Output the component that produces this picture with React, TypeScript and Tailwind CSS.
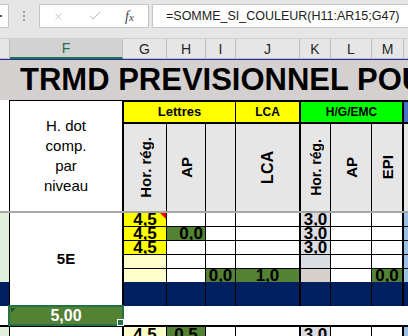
import React from 'react'
import { X, Check } from 'lucide-react'

type Cell = { bg: string; t?: string; right?: boolean; tri?: boolean }

const W = 'bg-white'
const Y = 'bg-[#ffff00]'
const LY = 'bg-[#ffffcc]'
const GR = 'bg-[#548235]'
const KG = 'bg-[#dcdce3]'
const KW = 'bg-[#d6d0cc]'
const NB = 'bg-[#9bc2e6]'
const NAVY = 'bg-[#002060]'

// column boxes G..N (content + right border)
const cols = [
  'w-[43px] border-r border-black',
  'w-[39px] border-r border-black',
  'w-[30px] border-r border-black',
  'w-[65px] border-r-2 border-black',
  'w-[30px] border-r border-black',
  'w-[41px] border-r border-black',
  'w-[32px] border-r-2 border-black',
  'flex-1',
]

const letters: [string, string][] = [
  ['', 'w-[10px]'],
  ['F', 'w-[113px]'],
  ['G', 'w-[44px]'],
  ['H', 'w-[39px]'],
  ['I', 'w-[30px]'],
  ['J', 'w-[64px]'],
  ['K', 'w-[31px]'],
  ['L', 'w-[41px]'],
  ['M', 'w-[32px]'],
  ['', 'flex-1'],
]

const rows: Cell[][] = [
  [{ bg: Y, t: '4,5', tri: true }, { bg: W }, { bg: W }, { bg: W }, { bg: KG, t: '3,0' }, { bg: W }, { bg: W }, { bg: NB }],
  [{ bg: Y, t: '4,5' }, { bg: GR, t: '0,0', right: true }, { bg: W }, { bg: W }, { bg: KG, t: '3,0' }, { bg: W }, { bg: W }, { bg: NB }],
  [{ bg: Y, t: '4,5' }, { bg: W }, { bg: W }, { bg: W }, { bg: KG, t: '3,0' }, { bg: W }, { bg: W }, { bg: NB }],
  [{ bg: LY }, { bg: W }, { bg: W }, { bg: W }, { bg: KG }, { bg: W }, { bg: W }, { bg: NB }],
  [{ bg: LY }, { bg: W }, { bg: GR, t: '0,0' }, { bg: GR, t: '1,0' }, { bg: KW }, { bg: W }, { bg: GR, t: '0,0' }, { bg: NB }],
]

const lastRow: Cell[] = [
  { bg: LY, t: '4,5' }, { bg: GR, t: '0,5' }, { bg: W }, { bg: W }, { bg: KG, t: '3,0' }, { bg: W }, { bg: W }, { bg: NB },
]

const DataRow = ({ cells, h }: { cells: Cell[]; h: string }) => (
  <div className={`flex ${h}`}>
    {cells.map((c, i) => (
      <div
        key={i}
        className={`${cols[i]} ${c.bg} relative overflow-hidden flex items-center ${c.right ? 'justify-end pr-[2px]' : 'justify-center'}`}
      >
        {c.t && <span className="text-[17px] leading-[13px] font-bold text-black">{c.t}</span>}
        {c.tri && (
          <span className="absolute top-0 right-0 w-0 h-0 border-t-[6px] border-l-[6px] border-t-[#ff0000] border-l-transparent" />
        )}
      </div>
    ))}
  </div>
)

const subHeads: { t: string; size: string }[] = [
  { t: 'Hor. rég.', size: 'text-[15px]' },
  { t: 'AP', size: 'text-[15px]' },
  { t: '', size: '' },
  { t: 'LCA', size: 'text-[16px]' },
  { t: 'Hor. rég.', size: 'text-[14px]' },
  { t: 'AP', size: 'text-[15px]' },
  { t: 'EPI', size: 'text-[15px]' },
  { t: '', size: '' },
]

export default function App() {
  return (
    <div className="w-[408px] h-[336px] overflow-hidden bg-white font-['Liberation_Sans',Arial,sans-serif] text-black">
      {/* Formula toolbar */}
      <div className="h-[38px] bg-[#e6e6e6] flex items-start pt-[4px]">
        <div className="w-[9px] h-[24px] bg-white border border-l-0 border-[#c6c6c6] flex items-center">
          <span className="w-[2px] h-[2px] bg-[#555]" />
        </div>
        <div className="ml-[14px] mt-[7px] flex flex-col gap-[2px]">
          <span className="w-[2px] h-[2px] bg-[#a0a0a0]" />
          <span className="w-[2px] h-[2px] bg-[#a0a0a0]" />
          <span className="w-[2px] h-[2px] bg-[#a0a0a0]" />
        </div>
        <div className="ml-[14px] w-[110px] h-[24px] bg-white border border-[#c6c6c6] flex items-center">
          <X className="ml-[13px] text-[#a8a8a8]" size={11} strokeWidth={1.4} />
          <Check className="ml-[24px] text-[#a8a8a8]" size={14} strokeWidth={1.6} />
          <span className="ml-[23px] italic font-['Liberation_Serif',serif] text-[14px] text-[#444]">
            f<span className="text-[11px]">x</span>
          </span>
        </div>
        <div className="ml-[3px] flex-1 h-[24px] bg-white border border-r-0 border-[#c6c6c6] flex items-center pl-[13px] text-[12.5px] text-[#222] whitespace-nowrap">
          =SOMME_SI_COULEUR(H11:AR15;G47)
        </div>
      </div>

      {/* Column letters */}
      <div className="h-[21px] flex border-t border-[#d0d0d0]">
        {letters.map(([l, w], i) => (
          <div
            key={i}
            className={`${w} ${i === letters.length - 1 ? '' : 'border-r border-[#bdbdbd]'} ${
              l === 'F'
                ? 'bg-[#d2d2d2] text-[#217346] border-b-2 border-b-[#217346]'
                : 'bg-[#e6e6e6] text-[#262626] border-b border-b-[#bdbdbd]'
            } flex items-center justify-center text-[14px] leading-[20px]`}
          >
            {l}
          </div>
        ))}
      </div>
      <div className="h-[1px] bg-[#2b2ba6]" />

      {/* Title */}
      <div className="h-[40px] bg-[#d4d0d0] pl-[20px] whitespace-nowrap overflow-hidden text-[31px] leading-[40px] font-bold">
        TRMD PREVISIONNEL POUR
      </div>

      {/* Header block */}
      <div className="h-[111px] flex">
        <div className="w-[9px] bg-white" />
        <div className="w-[113px] border-l border-t border-black bg-white flex items-center justify-center text-center text-[15px] leading-[20px]">
          H. dot
          <br />
          comp.
          <br />
          par
          <br />
          niveau
        </div>
        <div className="flex-1 border-l-2 border-t-2 border-black flex flex-col">
          <div className="flex h-[22px] border-b-2 border-black">
            <div className="w-[112px] border-r border-black bg-[#ffff00] flex items-center justify-center text-[13px] font-bold">
              Lettres
            </div>
            <div className="w-[65px] border-r-2 border-black bg-[#ffff00] flex items-center justify-center text-[12px] font-bold">
              LCA
            </div>
            <div className="w-[103px] border-r-2 border-black bg-[#00ff00] flex items-center justify-center text-[12px] font-bold">
              H/G/EMC
            </div>
            <div className="flex-1 bg-[#4472c4]" />
          </div>
          <div className="flex flex-1">
            {subHeads.map((s, i) => (
              <div key={i} className={`${cols[i]} bg-[#e7e6e6] flex items-center justify-center overflow-hidden`}>
                {s.t && (
                  <span className={`[writing-mode:vertical-rl] rotate-180 font-bold leading-none whitespace-nowrap ${s.size}`}>
                    {s.t}
                  </span>
                )}
              </div>
            ))}
          </div>
        </div>
      </div>

      {/* Freeze line */}
      <div className="h-[2px] bg-[#a6a6a6]" />

      {/* Data block */}
      <div className="h-[93px] flex">
        <div className="w-[9px] flex flex-col">
          <div className="h-[69px] bg-[#e2efda]" />
          <div className={`h-[24px] ${NAVY}`} />
        </div>
        <div className="w-[113px] border-l border-black bg-white flex items-center justify-center font-bold text-[15px]">
          5E
        </div>
        <div className="flex-1 border-l-2 border-black flex flex-col">
          {rows.map((r, i) => (
            <DataRow key={i} cells={r} h={i < 4 ? 'h-[14px] border-b border-black' : 'h-[13px]'} />
          ))}
          <div className="flex h-[24px]">
            {cols.map((c, i) => (
              <div key={i} className={`${c} ${NAVY}`} />
            ))}
          </div>
        </div>
      </div>

      {/* Selected row */}
      <div className="h-[19px] flex bg-white">
        <div className="w-[9px]" />
        <div className="w-[113px] relative">
          <div className="absolute left-[-1px] top-[-1px] w-[116px] h-[21px] z-10 border-2 border-[#217346] bg-[#548235] flex items-center justify-center text-white font-bold text-[16px] leading-none">
            5,00
            <span className="absolute left-[1px] top-[1px] w-0 h-0 border-t-[5px] border-r-[5px] border-t-[#1f5a2b] border-r-transparent" />
            <span className="absolute right-[-2px] bottom-[-2px] w-[7px] h-[7px] bg-[#217346] border border-white" />
          </div>
        </div>
      </div>
      <div className="h-[2px] bg-black" />

      {/* Next row */}
      <div className="flex h-[14px]">
        <div className="w-[9px] bg-[#e2efda]" />
        <div className="w-[113px] border-l border-black bg-white" />
        <div className="flex-1 border-l-2 border-black">
          <DataRow cells={lastRow} h="h-[14px]" />
        </div>
      </div>
    </div>
  )
}
